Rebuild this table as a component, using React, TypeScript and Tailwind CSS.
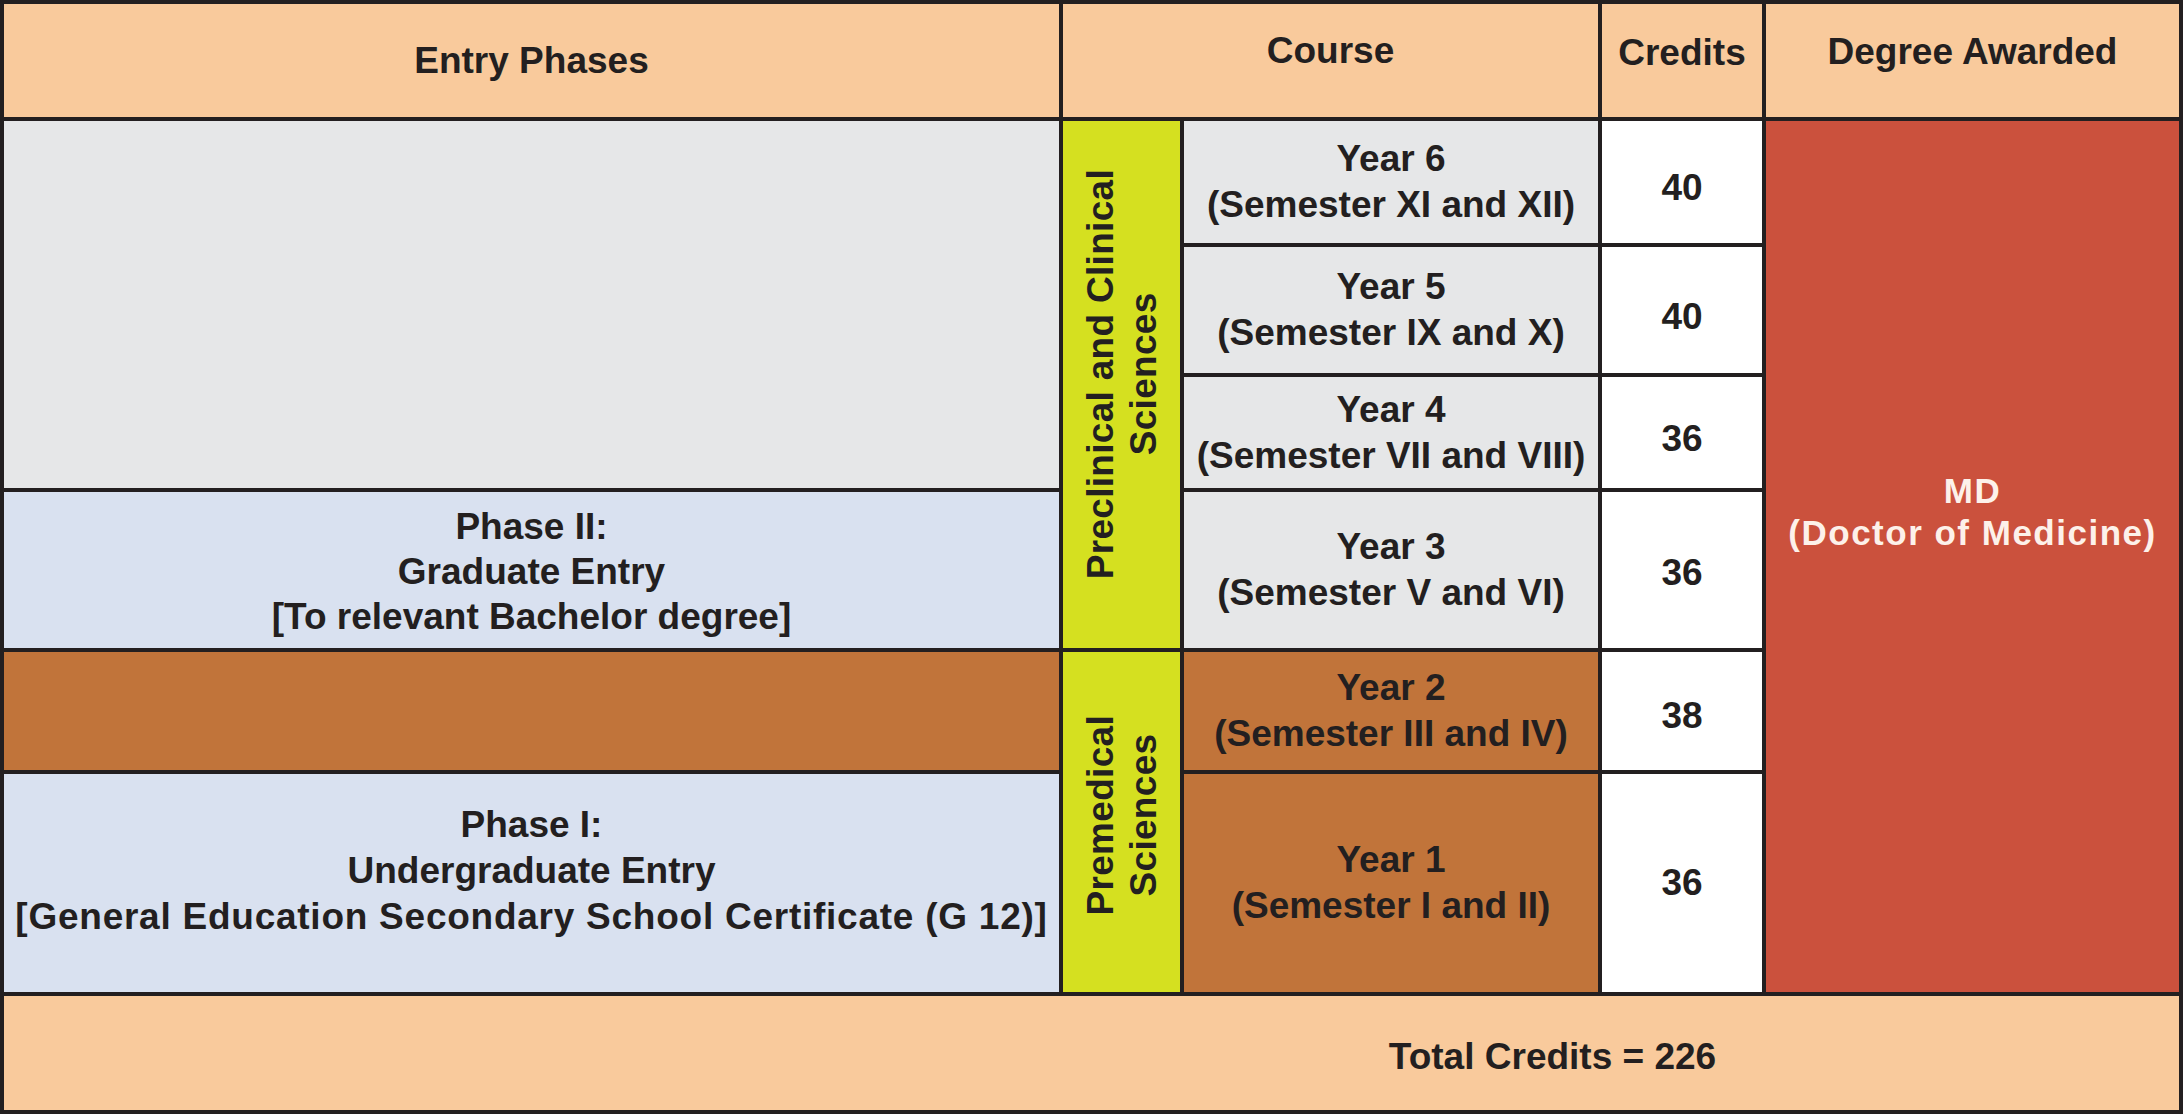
import React from "react";

const courses = [
  { year: "Year 6", sem: "(Semester XI and XII)", credits: "40", bg: "bg-[#e6e7e8]", row: "row-start-2", pad: "pt-[12px]" },
  { year: "Year 5", sem: "(Semester IX and X)", credits: "40", bg: "bg-[#e6e7e8]", row: "row-start-3", pad: "pt-[14px]" },
  { year: "Year 4", sem: "(Semester VII and VIII)", credits: "36", bg: "bg-[#e6e7e8]", row: "row-start-4", pad: "pt-[12px]" },
  { year: "Year 3", sem: "(Semester V and VI)", credits: "36", bg: "bg-[#e6e7e8]", row: "row-start-5", pad: "pt-[6px]" },
  { year: "Year 2", sem: "(Semester III and IV)", credits: "38", bg: "bg-[#c1743a]", row: "row-start-6", pad: "pt-[10px]" },
  { year: "Year 1", sem: "(Semester I and II)", credits: "36", bg: "bg-[#c1743a]", row: "row-start-7", pad: "pt-[0px]" },
];

export default function App() {
  return (
    <div className="w-[2183px] h-[1114px] bg-[#231f20] font-['Liberation_Sans',Arial,sans-serif] font-bold text-[#231f20] text-[37px] leading-[46px]">
      <div className="grid grid-cols-[1055px_117px_414px_160px_413px] grid-rows-[113px_122px_126px_111px_156px_118px_218px_114px] gap-[4px] p-[4px] h-full">
        {/* Header */}
        <div className="col-start-1 row-start-1 bg-[#f9ca9c] flex items-center justify-center">
          Entry Phases
        </div>
        <div className="col-start-2 col-span-2 row-start-1 bg-[#f9ca9c] flex items-center justify-center pb-[20px]">
          Course
        </div>
        <div className="col-start-4 row-start-1 bg-[#f9ca9c] flex items-center justify-center pb-[16px]">
          Credits
        </div>
        <div className="col-start-5 row-start-1 bg-[#f9ca9c] flex items-center justify-center pb-[18px]">
          Degree Awarded
        </div>

        {/* Entry phases column */}
        <div className="col-start-1 row-start-2 row-span-3 bg-[#e6e7e8]" />
        <div className="col-start-1 row-start-5 bg-[#d9e1f0] flex flex-col items-center justify-center text-center leading-[45px] pt-[2px]">
          <span>Phase II:</span>
          <span>Graduate Entry</span>
          <span>[To relevant Bachelor degree]</span>
        </div>
        <div className="col-start-1 row-start-6 bg-[#c1743a]" />
        <div className="col-start-1 row-start-7 bg-[#d9e1f0] flex flex-col items-center justify-center text-center leading-[46px] pb-[24px]">
          <span>Phase I:</span>
          <span>Undergraduate Entry</span>
          <span className="tracking-[0.75px]">[General Education Secondary School Certificate (G 12)]</span>
        </div>

        {/* Yellow side labels */}
        <div className="col-start-2 row-start-2 row-span-4 bg-[#d5e020] flex items-center justify-center pb-[20px]">
          <div className="[writing-mode:vertical-rl] rotate-180 text-center leading-[43px] whitespace-nowrap tracking-[0.3px]">
            Preclinical and Clinical
            <br />
            Sciences
          </div>
        </div>
        <div className="col-start-2 row-start-6 row-span-2 bg-[#d5e020] flex items-center justify-center pb-[14px]">
          <div className="[writing-mode:vertical-rl] rotate-180 text-center leading-[43px] whitespace-nowrap tracking-[0.3px]">
            Premedical
            <br />
            Sciences
          </div>
        </div>

        {/* Courses & credits */}
        {courses.map((c) => (
          <React.Fragment key={c.year}>
            <div className={`col-start-3 ${c.row} ${c.bg} flex flex-col items-center justify-center text-center leading-[46px]`}>
              <span>{c.year}</span>
              <span>{c.sem}</span>
            </div>
            <div className={`col-start-4 ${c.row} ${c.pad} bg-white flex items-center justify-center`}>
              {c.credits}
            </div>
          </React.Fragment>
        ))}

        {/* Degree */}
        <div className="col-start-5 row-start-2 row-span-6 bg-[#cb513d] flex flex-col items-center pt-[349px] text-[#fdf1ea] text-[35px] leading-[42px] tracking-[1.5px]">
          <span>MD</span>
          <span>(Doctor of Medicine)</span>
        </div>

        {/* Total */}
        <div className="col-start-1 col-span-5 row-start-8 bg-[#f9ca9c] flex items-center justify-center pl-[922px] pt-[8px]">
          Total Credits = 226
        </div>
      </div>
    </div>
  );
}
